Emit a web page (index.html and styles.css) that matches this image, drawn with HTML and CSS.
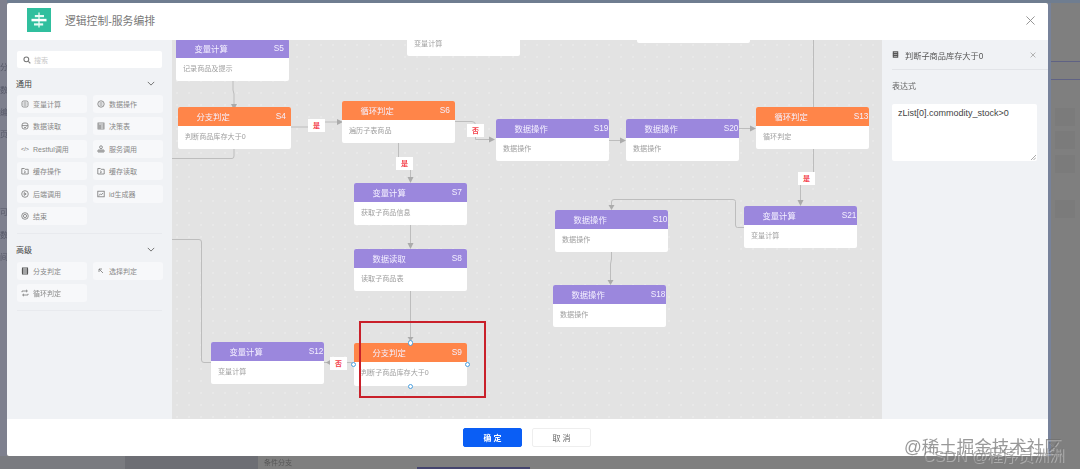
FILE: index.html
```html
<!DOCTYPE html>
<html lang="zh">
<head>
<meta charset="utf-8">
<title>逻辑控制-服务编排</title>
<link rel="stylesheet" href="styles.css">
</head>
<body>
<div class="backdrop">
  <span class="bg-top"></span>
  <span class="bg-left"></span>
  <span class="bg-band b1"></span>
  <span class="bg-band b2"></span>
  <span class="bg-label">条件分支</span>
  <span class="bg-blue"></span>
  <span class="bg-line l1"></span>
  <span class="bg-line l2"></span>
  <span class="bg-strip"></span>
  <span class="bg-box x1"></span>
  <span class="bg-box x2"></span>
  <span class="bg-box x3"></span>
  <span class="bg-box x4"></span>
  <span class="side s1">分</span>
  <span class="side s2">数</span>
  <span class="side s3">编</span>
  <span class="side s4">页</span>
  <span class="side s5">可</span>
  <span class="side s6">数</span>
  <span class="side s7">间</span>
</div>
<section class="modal">
  <header class="head">
    <span class="logo"><svg viewBox="0 0 24 24" width="20" height="20"><rect x="11" y="3" width="2" height="18" fill="#bfeee0"/><rect x="7" y="6" width="11" height="2.6" fill="#e8fbf5"/><rect x="3" y="10.6" width="18" height="3" fill="#fff"/><rect x="6" y="16" width="11" height="2.6" fill="#e8fbf5"/></svg></span>
    <h1 class="title">逻辑控制-服务编排</h1>
    <svg class="close" viewBox="0 0 10 10" width="9" height="9"><path d="M.5.5l9 9M9.5.5l-9 9" stroke="#8a8a8a" stroke-width="1" fill="none"/></svg>
  </header>
  <div class="main">
    <aside class="palette">
      <div class="search"><svg viewBox="0 0 12 12" width="8" height="8"><circle cx="5" cy="5" r="3.6" fill="none" stroke="#777" stroke-width="1.6"/><path d="M8 8l3 3" stroke="#777" stroke-width="1.8"/></svg><span>搜索</span></div>
      <div class="group-head"><span>通用</span><svg viewBox="0 0 10 6" width="8" height="5"><path d="M1 1l4 4 4-4" fill="none" stroke="#555" stroke-width="1"/></svg></div>
      <div class="items">
        <div class="item"><svg class="ico" viewBox="0 0 8 8"><rect x="1" y="1" width="6" height="6" rx="1.5"/><path d="M2.5 3h3M2.5 5h3"/></svg>变量计算</div>
        <div class="item"><svg class="ico" viewBox="0 0 8 8"><circle cx="4" cy="4" r="3.2"/><path d="M2.5 3h3M2.5 5h3"/></svg>数据操作</div>
        <div class="item"><svg class="ico" viewBox="0 0 8 8"><rect x="1" y="1" width="6" height="6" rx="2"/><path d="M1 3.6h6M3 5.2l1 .8 1.4-1.4"/></svg>数据读取</div>
        <div class="item"><svg class="ico" viewBox="0 0 8 8"><rect x="1" y="1" width="6" height="6"/><path d="M1 3h6M1 5h6M3 3v4"/></svg>决策表</div>
        <div class="item"><span class="code">&lt;/&gt;</span>Restful调用</div>
        <div class="item"><svg class="ico" viewBox="0 0 8 8"><circle cx="4" cy="2.2" r="1.4"/><path d="M1 7V5h6v2zM3 5v2M5 5v2"/></svg>服务调用</div>
        <div class="item"><svg class="ico" viewBox="0 0 8 8"><path d="M.8 1.5h2.5l.8.8h3.1V7H.8zM3 3.6l1.6 1.4L3 6"/></svg>缓存操作</div>
        <div class="item"><svg class="ico" viewBox="0 0 8 8"><path d="M.8 1.5h2.5l.8.8h3.1V7H.8zM3 3.6l1.6 1.4L3 6"/></svg>缓存读取</div>
        <div class="item"><svg class="ico" viewBox="0 0 8 8"><circle cx="4" cy="4" r="3.3"/><path d="M3.2 2.6L5.2 4 3.2 5.4z"/></svg>后端调用</div>
        <div class="item"><svg class="ico" viewBox="0 0 8 8"><rect x=".8" y="1.2" width="6.4" height="5.6"/><path d="M2 5.6l1.4-1.8 1 1L6 3"/></svg>id生成器</div>
        <div class="item"><svg class="ico" viewBox="0 0 8 8"><circle cx="4" cy="4" r="3.3"/><circle cx="4" cy="4" r="1.6"/></svg>结束</div>
      </div>
      <div class="group-head second"><span>高级</span><svg viewBox="0 0 10 6" width="8" height="5"><path d="M1 1l4 4 4-4" fill="none" stroke="#555" stroke-width="1"/></svg></div>
      <div class="items">
        <div class="item"><svg class="ico solid" viewBox="0 0 8 8"><path d="M1.5 1h5v6h-5zM.8 3h6.4M.8 5h6.4"/></svg>分支判定</div>
        <div class="item"><svg class="ico" viewBox="0 0 8 8"><path d="M2 2l4 4M2 5V2h3"/></svg>选择判定</div>
        <div class="item"><svg class="ico" viewBox="0 0 8 8"><path d="M1 3.2V2h5.2M5 .8L6.4 2 5 3.2M7 4.8V6H1.8M3 4.8L1.6 6 3 7.2"/></svg>循环判定</div>
      </div>
    </aside>
    <div class="canvas">
      <svg class="edges" width="710" height="379" viewBox="0 0 710 379">
        <g fill="none" stroke="#bdbdbd" stroke-width="1">
          <path d="M61 41V50L62 54V65"/>
          <path d="M119 87H145V82H166"/>
          <path d="M62 109V116Q62 118.500 60 118.500H0"/>
          <path d="M0 199.500H27Q29.500 199.500 29.500 202V320Q29.500 322.500 32 322.500H39"/>
          <path d="M283 81.500H300Q303.500 81.500 303.500 85V99.500H318"/>
          <path d="M226.500 103V118M238.500 129V138"/>
          <path d="M238.500 185V203"/>
          <path d="M238.500 251V298"/>
          <path d="M437 100.500H449"/>
          <path d="M567 88.500H579"/>
          <path d="M641.500 0V67M641.500 109V133M628.500 144V161"/>
          <path d="M572 187.500H565.500Q563.500 187.500 563.500 185V161.500Q563.500 159.500 561 159.500H442Q439.500 159.500 439.500 162V165"/>
          <path d="M439.500 212V219L438.500 224V240"/>
          <path d="M147 322.500H180"/>
        </g>
        <g fill="#ababab">
          <path d="M59 64h6l-3 6z"/>
          <path d="M165 79l6 3-6 3z"/>
          <path d="M235.500 137h6l-3 6z"/>
          <path d="M235.500 203h6l-3 6z"/>
          <path d="M317 96.500l6 3-6 3z"/>
          <path d="M448 97.500l6 3-6 3z"/>
          <path d="M578 85.500l6 3-6 3z"/>
          <path d="M625.500 160h6l-3 6z"/>
          <path d="M436.500 165h6l-3 5z"/>
          <path d="M435.500 240h6l-3 5z"/>
          <path d="M235.500 297h6l-3 4z"/>
          <path d="M159 319.500v6l-5-3z"/>
        </g>
      </svg>
      <article class="node purple n-s5"><div class="nh"><b>变量计算</b><em>S5</em></div><p>记录商品及提示</p></article>
      <article class="node bare n-t1"><p>变量计算</p></article>
      <article class="node bare n-t2"></article>
      <article class="node orange n-s4"><div class="nh"><b>分支判定</b><em>S4</em></div><p>判断商品库存大于0</p></article>
      <article class="node orange n-s6"><div class="nh"><b>循环判定</b><em>S6</em></div><p>遍历子表商品</p></article>
      <article class="node purple n-s19"><div class="nh"><b>数据操作</b><em>S19</em></div><p>数据操作</p></article>
      <article class="node purple n-s20"><div class="nh"><b>数据操作</b><em>S20</em></div><p>数据操作</p></article>
      <article class="node orange n-s13"><div class="nh"><b>循环判定</b><em>S13</em></div><p>循环判定</p></article>
      <article class="node purple n-s7"><div class="nh"><b>变量计算</b><em>S7</em></div><p>获取子商品信息</p></article>
      <article class="node purple n-s10"><div class="nh"><b>数据操作</b><em>S10</em></div><p>数据操作</p></article>
      <article class="node purple n-s21"><div class="nh"><b>变量计算</b><em>S21</em></div><p>变量计算</p></article>
      <article class="node purple n-s8"><div class="nh"><b>数据读取</b><em>S8</em></div><p>读取子商品表</p></article>
      <article class="node purple n-s18"><div class="nh"><b>数据操作</b><em>S18</em></div><p>数据操作</p></article>
      <article class="node purple n-s12"><div class="nh"><b>变量计算</b><em>S12</em></div><p>变量计算</p></article>
      <article class="node orange n-s9"><div class="nh"><b>分支判定</b><em>S9</em></div><p>判断子商品库存大于0</p></article>
      <span class="tag t1">是</span>
      <span class="tag t2">否</span>
      <span class="tag t3">是</span>
      <span class="tag t4">是</span>
      <span class="tag t5">否</span>
      <span class="port p1"></span><span class="port p2"></span><span class="port p3"></span><span class="port p4"></span>
      <div class="mark"></div>
    </div>
    <aside class="props">
      <div class="props-head"><svg class="ph-ico" viewBox="0 0 8 8"><path d="M1.500 1h5v6h-5zM.8 3h6.400M.8 5h6.400"/></svg><span class="ph-title">判断子商品库存大于0</span><svg viewBox="0 0 10 10" width="6" height="6"><path d="M1 1l8 8M9 1L1 9" stroke="#999" stroke-width="1.2" fill="none"/></svg></div>
      <label class="lbl">表达式</label>
      <div class="expr">zList[0].commodity_stock&gt;0<svg class="grip" viewBox="0 0 6 6" width="5" height="5"><path d="M0 6L6 0M3 6L6 3" stroke="#999" stroke-width="1"/></svg></div>
    </aside>
  </div>
  <footer class="foot">
    <button class="btn primary">确 定</button>
    <button class="btn">取 消</button>
  </footer>
</section>
<div class="wm wm1">@稀土掘金技术社区</div>
<div class="wm wm2">CSDN @程序员洲洲</div>
</body>
</html>
```
FILE: styles.css
```css
*{box-sizing:border-box}
html,body{margin:0;height:100%}
body{width:1080px;height:469px;overflow:hidden;position:relative;background:#7f7f7f;font-family:"Liberation Sans","Noto Sans CJK SC",sans-serif;color:#555}
.backdrop{position:absolute;inset:0;filter:blur(.6px)}
.backdrop span{position:absolute}
.bg-top{left:0;right:0;top:0;height:3px;background:#6f7d90}
.bg-left{left:0;top:0;bottom:0;width:7px;background:#7e808e}
.bg-band{top:456px;bottom:0}
.b1{left:0;width:125px;background:#7a7b80}
.b2{left:125px;width:133px;background:#6d6e74}
.bg-label{left:264px;top:456px;font-size:7px;line-height:13px;color:#565656}
.bg-blue{left:417px;width:113px;top:467px;height:2px;background:#45456e}
.bg-line{left:1048px;right:0;height:1px;background:#5f6284}
.l1{top:61px}
.l2{top:79px}
.bg-strip{left:1048px;width:3px;top:3px;bottom:13px;background:#77829a}
.bg-box{left:1055px;width:20px;height:18px;background:#7b7b7b}
.x1{top:108px}
.x2{top:131px}
.x3{top:155px}
.x4{top:200px}
.side{left:0;width:7px;overflow:hidden;font-size:8px;line-height:10px;color:#565868}
.s1{top:63px}
.s2{top:86px}
.s3{top:108px}
.s4{top:130px}
.s5{top:208px}
.s6{top:231px}
.s7{top:253px}
.modal{position:absolute;left:7px;top:3px;width:1041px;height:453px;background:#fff;display:flex;flex-direction:column;border-radius:2px;filter:blur(.45px)}
.head{height:37px;flex:none;display:flex;align-items:center;padding:0 13px 3px 20px}
.logo{width:24px;height:24px;background:#30bf9e;display:flex;align-items:center;justify-content:center;flex:none}
.title{margin:0 0 0 14px;font-size:10.800px;font-weight:400;color:#777;flex:1}
.close{flex:none}
.main{flex:1;display:flex;min-height:0}
.palette{width:165px;flex:none;background:#f0f2f5;padding:11px 10px 0}
.search{height:17px;background:#fff;border-radius:2px;display:flex;align-items:center;gap:3px;padding-left:6px;font-size:7px;color:#c9c9c9}
.group-head{display:flex;justify-content:space-between;align-items:center;margin:8px 0 0 -1px;height:14px;font-size:8px;color:#444;padding-right:7px}
.group-head.second{margin-top:9px}
.items{display:grid;grid-template-columns:70px 70px;column-gap:6px;row-gap:4.400px;margin-top:5px;padding-bottom:8px;border-bottom:1px solid #e8eaee}
.item{height:18px;background:#f7f8fa;border-radius:3px;display:flex;align-items:center;font-size:7px;color:#888;padding-left:4px;white-space:nowrap}
.ico{width:8px;height:8px;flex:none;margin-right:4px;fill:none;stroke:#777;stroke-width:.8}
.ico.solid{stroke:#555;stroke-width:1.100}
.code{width:8px;flex:none;margin-right:4px;font-size:5.500px;color:#666;white-space:nowrap}
.canvas{width:710px;flex:none;position:relative;overflow:hidden;background-color:#e3e3e3;background-image:radial-gradient(circle at 1px 1px,#e9e9e9 .7px,transparent 1px);background-size:12px 12px;background-position:4px 4px}
.edges{position:absolute;left:0;top:0;overflow:visible}
.node{position:absolute;width:113px;height:42px;background:#fff;border-radius:2px;display:flex;flex-direction:column;overflow:hidden}
.nh{height:18.500px;flex:none;display:flex;align-items:center;justify-content:space-between;padding:0 0 1px 18.500px;color:#f4f0ff;font-size:8.300px}
.nh b{font-weight:400}
.nh em{font-style:normal;width:15.300px;white-space:nowrap}
.purple .nh{background:#9b87dd}
.orange .nh{background:#ff8549}
.node p{margin:0;font-size:7.100px;color:#a0a0a0;padding:5.500px 7px 0;line-height:12px;white-space:nowrap}
.bare{border-radius:0 0 2px 2px}
.n-s5{left:4px;top:-1px}
.n-t1{left:235px;top:-26px}
.n-t1 p{padding-top:24px}
.n-t2{left:465px;top:-39px}
.n-s4{left:6px;top:67px}
.n-s6{left:170px;top:61px}
.n-s19{left:324px;top:79px}
.n-s20{left:454px;top:79px}
.n-s13{left:584px;top:67px}
.n-s7{left:182px;top:143px}
.n-s10{left:383px;top:170px}
.n-s21{left:572px;top:166px}
.n-s8{left:182px;top:209px}
.n-s18{left:381px;top:245px}
.n-s12{left:39px;top:302px}
.n-s9{left:182px;top:303px;height:43px}
.tag{position:absolute;width:17px;height:13px;background:#fff;color:#f4404a;font-size:7px;font-weight:700;line-height:13px;text-align:center}
.t1{left:136px;top:79px}
.t2{left:295px;top:84px}
.t3{left:224px;top:117px}
.t4{left:626px;top:132px}
.t5{left:158px;top:317px}
.port{position:absolute;width:5.500px;height:5.500px;border:1px solid #4ba0e0;border-radius:50%;background:#fff}
.p1{left:235.500px;top:300px}
.p2{left:178.500px;top:321.500px}
.p3{left:292.500px;top:321.500px}
.p4{left:235.500px;top:343.500px}
.mark{position:absolute;left:187px;top:281px;width:127px;height:77px;border:2px solid #c9202a}
.props{flex:1;background:#f0f2f5;padding:0 10px 0 11px}
.props-head{height:30px;display:flex;align-items:center;border-bottom:1px solid #e2e4e8;margin:0 -10px 0 -1px;padding:0 12px 0 0;font-size:8.200px;color:#555}
.ph-ico{width:7px;height:7px;flex:none;fill:none;stroke:#555;stroke-width:1.200}
.ph-title{flex:1;margin-left:6px}
.lbl{display:block;font-size:8px;color:#666;margin:11px 0 0 -1px;height:12px;line-height:12px}
.expr{position:relative;margin:11px 0 0 -1px;height:57px;width:145px;background:#fff;border-radius:2px;font-size:9px;color:#444;padding:3px 6px;line-height:12px}
.grip{position:absolute;right:1px;bottom:1px}
.foot{height:37px;flex:none;display:flex;justify-content:center;gap:10px;padding:9px 1px 0 0}
.btn{width:59px;height:19px;background:#fff;border:1px solid #eee;border-radius:2px;font:400 8px "Liberation Sans","Noto Sans CJK SC",sans-serif;color:#666;padding:0}
.btn.primary{background:#0a5ef5;border-color:#0a5ef5;color:#fff;font-weight:700}
.wm{position:absolute;white-space:nowrap;z-index:5;text-shadow:1px 1px 0 rgba(255,255,255,.35)}
.wm1{left:904px;top:433px;font-size:17.500px;color:rgba(110,110,110,.7)}
.wm2{left:923px;top:443px;font-size:15.500px;color:rgba(120,120,120,.6)}
```
